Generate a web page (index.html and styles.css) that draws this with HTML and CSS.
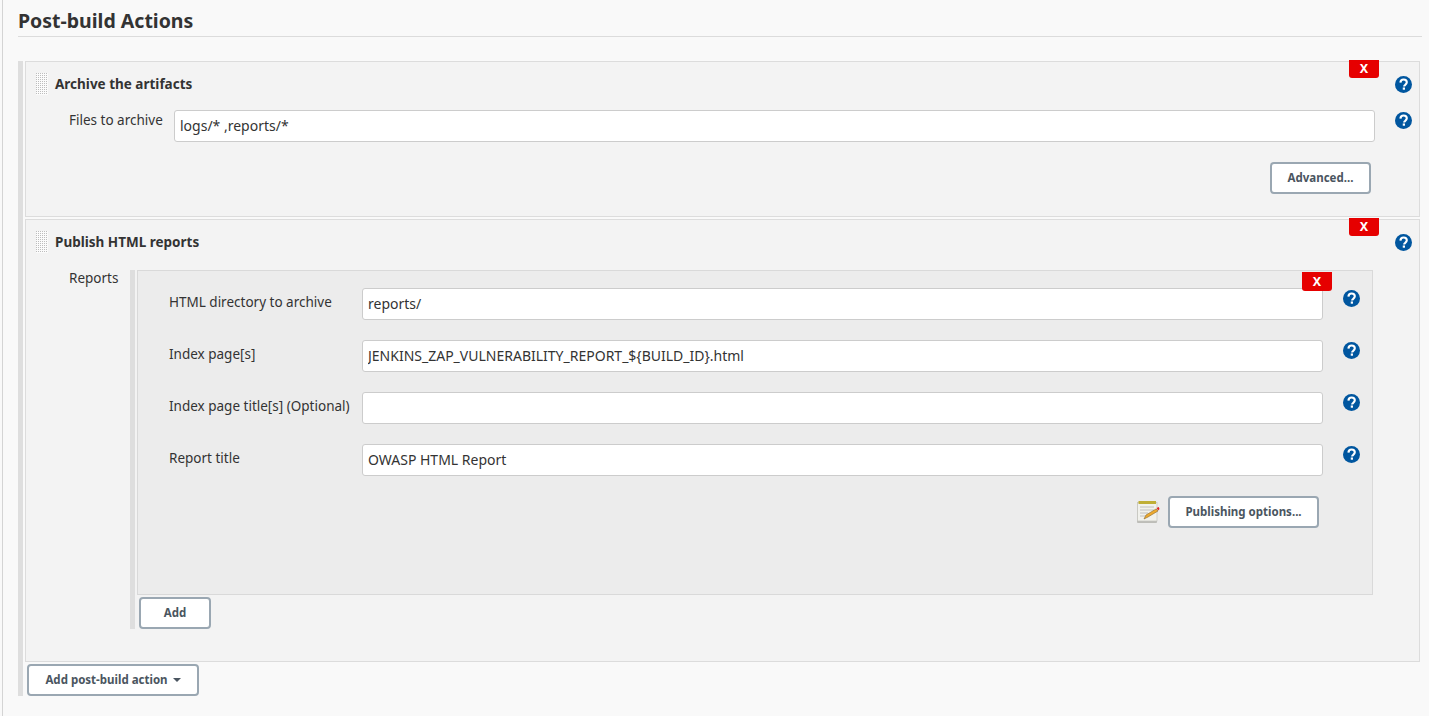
FILE: index.html
```html
<!DOCTYPE html>
<html lang="en">
<head>
<meta charset="utf-8">
<title>Post-build Actions</title>
<link rel="stylesheet" href="styles.css">
</head>
<body>
<svg class="defs" width="0" height="0" aria-hidden="true">
  <symbol id="help" viewBox="0 0 16 16">
    <circle cx="8" cy="8" r="8" fill="#00569f"/>
    <path d="M5.100 6.200C5.200 4.400 6.400 3.300 8.100 3.300c1.700 0 3 1.100 3 2.600 0 1.200-.7 1.800-1.500 2.400-.7.5-1 .8-1 1.600" fill="none" stroke="#fff" stroke-width="2"/>
    <rect x="7.300" y="10.800" width="2.100" height="2.100" fill="#fff"/>
  </symbol>
  <symbol id="grip" viewBox="0 0 12 22">
    <pattern id="dots" width="2" height="2" patternUnits="userSpaceOnUse"><rect width="1" height="1" fill="#bdbdbd"/></pattern>
    <rect width="12" height="22" fill="#fbfbfb"/>
    <rect width="12" height="22" fill="url(#dots)"/>
  </symbol>
</svg>
<main class="page">
  <h2 class="section-title">Post-build Actions</h2>
  <div class="actions">
    <section class="chunk chunk-first">
      <button class="del">X</button>
      <div class="chunk-head">
        <svg class="grip"><use href="#grip"/></svg>
        <span class="chunk-title">Archive the artifacts</span>
        <svg class="help help-head"><use href="#help"/></svg>
      </div>
      <div class="field-row">
        <label class="lbl">Files to archive</label>
        <input class="txt" value="logs/* ,reports/*">
        <svg class="help"><use href="#help"/></svg>
      </div>
      <div class="adv-row"><button class="btn btn-adv">Advanced...</button></div>
    </section>
    <section class="chunk chunk-second">
      <button class="del">X</button>
      <div class="chunk-head">
        <svg class="grip"><use href="#grip"/></svg>
        <span class="chunk-title">Publish HTML reports</span>
        <svg class="help help-head"><use href="#help"/></svg>
      </div>
      <div class="reports">
        <span class="lbl lbl-reports">Reports</span>
        <div class="repeat">
          <div class="inner">
            <button class="del del-inner">X</button>
            <div class="inner-row">
              <label class="lbl">HTML directory to archive</label>
              <input class="txt" value="reports/">
              <svg class="help"><use href="#help"/></svg>
            </div>
            <div class="inner-row">
              <label class="lbl">Index page[s]</label>
              <input class="txt" value="JENKINS_ZAP_VULNERABILITY_REPORT_${BUILD_ID}.html">
              <svg class="help"><use href="#help"/></svg>
            </div>
            <div class="inner-row">
              <label class="lbl">Index page title[s] (Optional)</label>
              <input class="txt" value="">
              <svg class="help"><use href="#help"/></svg>
            </div>
            <div class="inner-row">
              <label class="lbl">Report title</label>
              <input class="txt" value="OWASP HTML Report">
              <svg class="help"><use href="#help"/></svg>
            </div>
            <div class="pub-row">
              <svg class="note" viewBox="0 0 24 24">
                <rect x="1" y="3" width="20" height="20" rx="1" fill="#bdbdb8"/>
                <rect x="1.500" y="2.500" width="19.500" height="18.500" fill="#f1f1ec" stroke="#c4c4bc" stroke-width=".7"/>
                <rect x="2.500" y="1" width="17.500" height="3" fill="#bfae35"/>
                <path d="M4 7h14M4 10h14M4 13h8M4 16h6" stroke="#c0c0c0"/>
                <path d="M8 19l2-4 10-6 2 2-10 6z" fill="#eda92e" stroke="#8d6a2a" stroke-width=".6"/>
                <path d="M20.500 8l2.300-1 .7 2-1.300 1.500z" fill="#e32222"/>
              </svg>
              <button class="btn btn-pub">Publishing options...</button>
            </div>
          </div>
          <button class="btn btn-add">Add</button>
        </div>
      </div>
    </section>
    <button class="btn btn-post">Add post-build action<span class="caret"></span></button>
  </div>
</main>
</body>
</html>
```
FILE: styles.css
```css
* { box-sizing: border-box; }
html, body { margin: 0; height: 100%; }
body {
  background: #f9f9f9;
  color: #333;
  font-family: "Noto Sans", "Open Sans", sans-serif;
  font-size: 14px;
  overflow: hidden;
}
.defs { position: absolute; }
.page {
  margin-left: 2px;
  height: 716px;
  border-left: 1px solid #d4d4d4;
  padding-left: 15px;
  padding-right: 7px;
}
.section-title {
  margin: 0;
  height: 37px;
  padding-top: 8px;
  font-size: 19.500px;
  line-height: 26px;
  font-weight: 700;
  color: #333;
  border-bottom: 1px solid #dcdcdc;
}
.actions {
  margin-top: 24px;
  border-left: 5px solid #dedede;
  padding-left: 2px;
  height: 635px;
  width: 1402px;
}
.chunk {
  position: relative;
  background: #f3f3f3;
  border: 1px solid #dcdcdc;
}
.chunk-first { height: 156px; margin-bottom: 2px; }
.chunk-second { height: 443px; margin-bottom: 2px; }
.del {
  position: absolute;
  top: -2px;
  right: 40px;
  width: 30px;
  height: 18px;
  padding: 0;
  border: 0;
  border-radius: 0 0 3px 3px;
  background: #e60000;
  color: #fff;
  font: 700 12.500px/18px "Noto Sans", sans-serif;
}
.del-inner { top: 1px; right: 40px; height: 19px; }
.chunk-head {
  display: flex;
  align-items: center;
  height: 22px;
  margin-top: 11px;
  padding-left: 10px;
}
.grip { width: 12px; height: 22px; flex: none; }
.chunk-title {
  margin-left: 7px;
  font-weight: 700;
  font-size: 13.500px;
  flex: 1;
}
.help { width: 17px; height: 17px; flex: none; }
.help-head { margin-right: 7px; }
.field-row {
  display: grid;
  grid-template-columns: 105px 1201px 37px;
  margin-top: 15px;
  padding-left: 43px;
  align-items: start;
}
.field-row .help { margin-left: 20px; margin-top: 2px; }
.lbl { font-size: 13.500px; line-height: 20px; color: #333; white-space: nowrap; }
.txt {
  display: block;
  width: 100%;
  height: 32px;
  border: 1px solid #ccc;
  border-radius: 3px;
  background: #fff;
  padding: 0 5px 2px;
  color: #333;
  font: 14px "Noto Sans", sans-serif;
}
.adv-row { display: flex; justify-content: flex-end; margin-top: 20px; padding-right: 48px; }
.btn {
  border: 2px solid #9aa7b2;
  border-radius: 4px;
  background: #fff;
  color: #4a5560;
  font: 700 11.500px "Noto Sans", sans-serif;
  padding: 0 0 2px;
}
.btn-adv { width: 101px; height: 32px; }
.reports { display: flex; margin-top: 17px; padding-left: 43px; }
.lbl-reports { width: 61px; margin-top: -2px; }
.repeat {
  width: 1243px;
  height: 359px;
  border-left: 5px solid #dedede;
  padding-left: 2px;
}
.inner {
  position: relative;
  height: 325px;
  background: #ececec;
  border: 1px solid #d9d9d9;
  padding-top: 17px;
}
.inner-row {
  display: grid;
  grid-template-columns: 193px 961px 37px;
  padding-left: 31px;
  margin-bottom: 20px;
  height: 32px;
  align-items: start;
}
.inner-row .lbl { margin-top: 4px; }
.inner-row .help { margin-left: 20px; margin-top: 2px; }
.pub-row {
  display: flex;
  justify-content: flex-end;
  align-items: center;
  padding-right: 53px;
}
.note { width: 24px; height: 24px; margin-right: 8px; }
.btn-pub { width: 151px; height: 32px; }
.btn-add { width: 72px; height: 32px; margin: 2px 0 0 2px; display: block; }
.btn-post { width: 172px; height: 32px; margin-left: 2px; display: block; }
.caret {
  display: inline-block;
  margin-left: 5px;
  vertical-align: 2px;
  border: 4px solid transparent;
  border-top-color: #4a5560;
  border-bottom: 0;
}
```
